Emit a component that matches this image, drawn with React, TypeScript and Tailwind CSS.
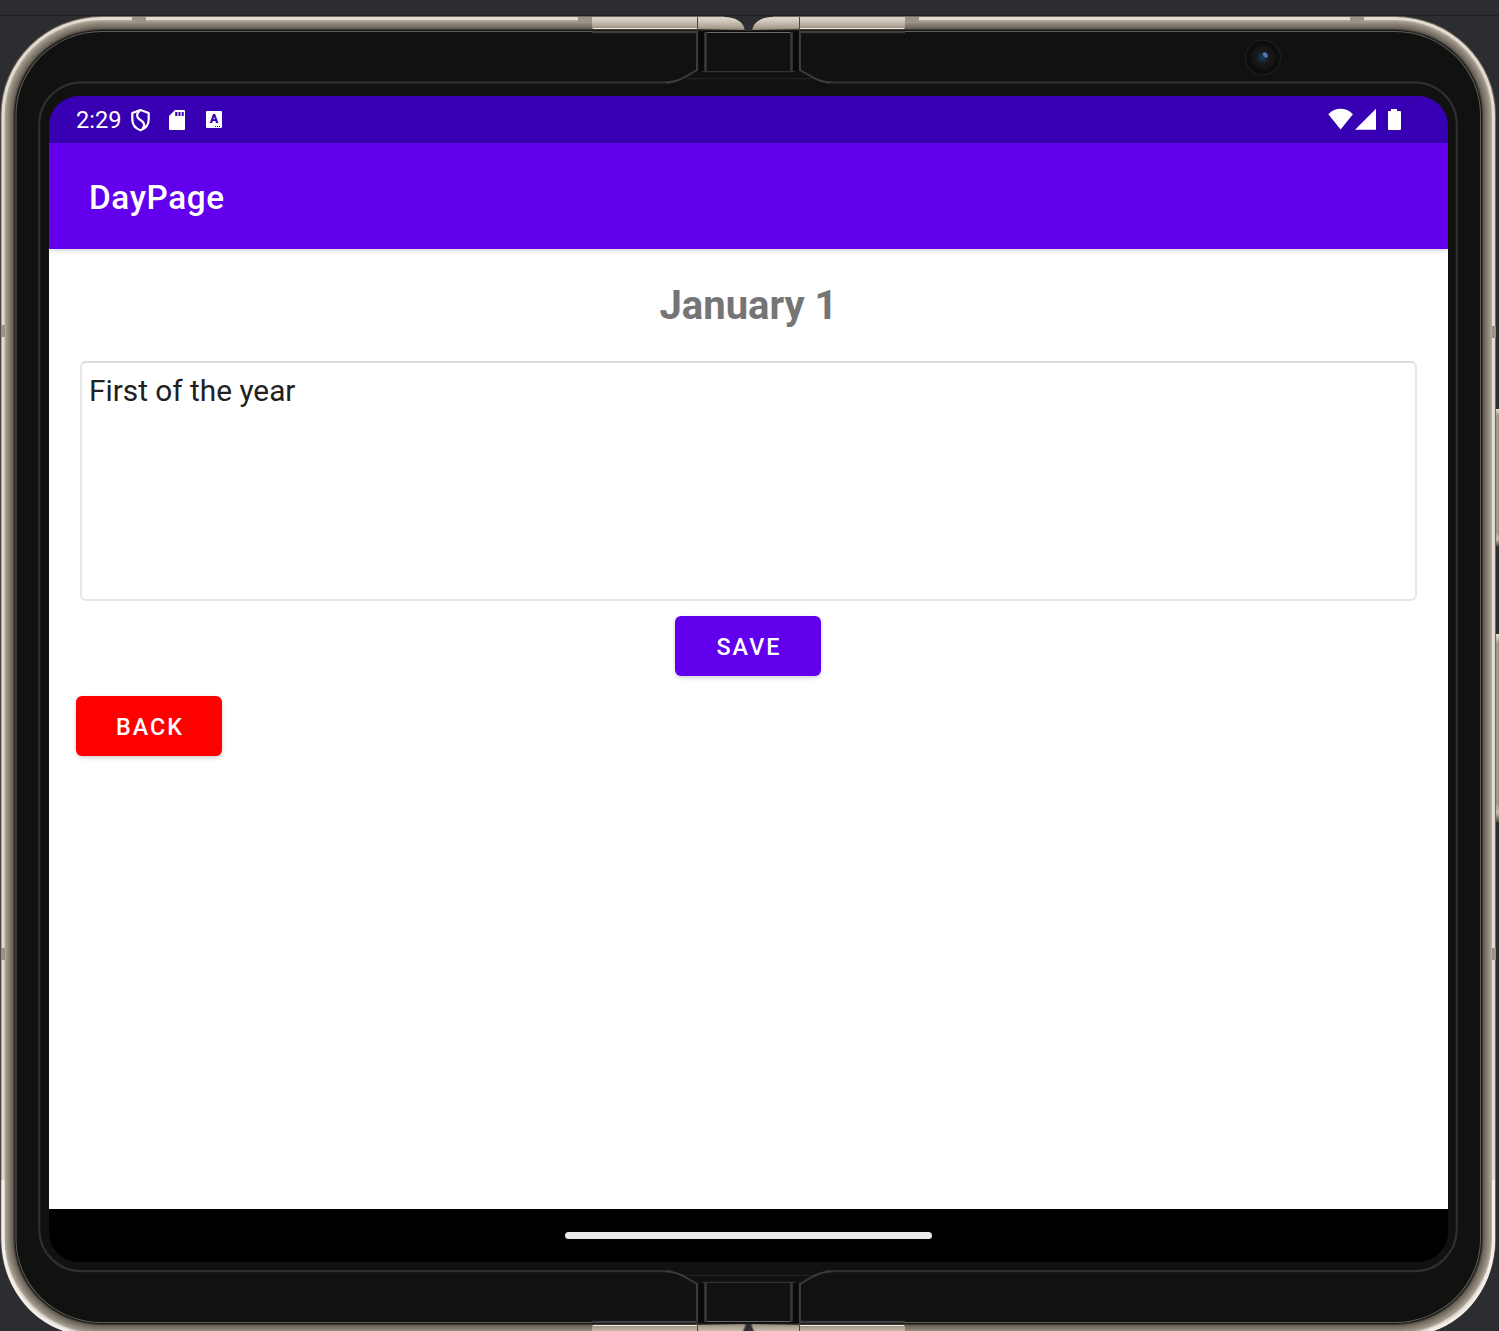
import React from "react";

const RIM = [
  { inset: 0, color: "#6f685e" },
  { inset: 1, color: "#e3dbd0" },
  { inset: 4, color: "#b5ada1" },
  { inset: 5, color: "#a19a8e" },
  { inset: 6, color: "#999286" },
  { inset: 7, color: "#91897d" },
  { inset: 8, color: "#898175" },
  { inset: 9, color: "#81796d" },
  { inset: 10, color: "#797165" },
  { inset: 11, color: "#70695d" },
  { inset: 12, color: "#645d52" },
  { inset: 13, color: "#3d3832" },
  { inset: 14, color: "#1b1a18" },
  { inset: 15, color: "#5b5c5c" },
  { inset: 16, color: "#111110" },
];

function HalfHinge() {
  return (
    <g fill="none">
      <rect x="592" y="17" width="105" height="12" fill="url(#hinge)" />
      <path d="M593 28.5H697" stroke="#f1ece3" />
      <path d="M698 17H724C736 17 744 22 745 30L698 29Z" fill="url(#hinge)" />
      <path d="M697.5 17V31" stroke="#4d473f" />
      <rect x="697" y="31" width="52" height="52" fill="#0c0c0c" />
      <path d="M698 69L670 84H749V33H698Z" fill="#111111" />
      <path d="M592 32.3H697V70L683 78Q674 82.5 666 82.5" stroke="#393b3c" strokeWidth="2" />
      <rect x="699" y="33" width="5" height="38" fill="#090909" />
      <path d="M705.5 32V71" stroke="#383b3d" strokeWidth="2.4" />
      <path d="M707 32.5H749" stroke="#696c6c" />
      <path d="M702 71.7H749" stroke="#303132" strokeWidth="1.3" />
      <path d="M686 78.7H749" stroke="#242627" />
    </g>
  );
}

function Hinge() {
  return (
    <g>
      <HalfHinge />
      <g transform="translate(1497 0) scale(-1 1)">
        <HalfHinge />
      </g>
    </g>
  );
}

function DeviceSkin() {
  return (
    <svg className="col-start-1 row-start-1 block h-[1331px] w-[1499px]" viewBox="0 0 1499 1331" aria-hidden="true">
      <defs>
        <linearGradient id="hinge" x1="0" x2="0" y1="0" y2="1">
          <stop offset="0" stopColor="#ddd5c9" />
          <stop offset=".3" stopColor="#d3cabe" />
          <stop offset=".8" stopColor="#aaa192" />
          <stop offset="1" stopColor="#8b8375" />
        </linearGradient>
        <linearGradient id="key" x1="0" x2="0" y1="0" y2="1">
          <stop offset="0" stopColor="#e8dfd4" />
          <stop offset=".05" stopColor="#a0978b" />
          <stop offset=".9" stopColor="#a0978b" />
          <stop offset=".95" stopColor="#c6bdb0" />
          <stop offset="1" stopColor="#51493f" />
        </linearGradient>
        <radialGradient id="lens">
          <stop offset="0" stopColor="#1d3e68" />
          <stop offset=".5" stopColor="#172a33" />
          <stop offset="1" stopColor="#17191a" />
        </radialGradient>
      </defs>
      <rect width="1499" height="1331" fill="#2b2d31" />
      <path d="M0 15.5H1499" stroke="#1d1e20" />
      <rect x="1496" y="409" width="3" height="137" fill="url(#key)" />
      <rect x="1496" y="634" width="3" height="188" fill="url(#key)" />
      {RIM.map((ring) => (
        <rect
          key={ring.inset}
          x={0.5 + ring.inset}
          y={16 + ring.inset}
          width={1495.5 - 2 * ring.inset}
          height={1322 - 2 * ring.inset}
          rx={101 - ring.inset}
          ry={99 - ring.inset}
          fill={ring.color}
        />
      ))}
      <g fill="none" stroke="#f3efe8" strokeWidth="3">
        <path d="M3 1180V1239C3 1285 31 1320 68 1331" />
        <path d="M1493.5 1180V1239C1493.5 1285 1466 1320 1429 1331" />
      </g>
      <g fill="#9b9385">
        <rect x="132" y="17" width="14" height="5" />
        <rect x="1350" y="17" width="14" height="5" />
        <rect x="578" y="17" width="14" height="5" />
        <rect x="905" y="17" width="14" height="5" />
        <rect x="1" y="325" width="4" height="12" />
        <rect x="1" y="948" width="4" height="12" />
        <rect x="1492" y="326" width="4" height="12" />
        <rect x="1492" y="948" width="4" height="12" />
      </g>
      <rect x="39.2" y="82.3" width="1417.6" height="1188.9" rx="42" fill="none" stroke="#2e2f30" strokeWidth="2.2" />
      <Hinge />
      <path d="M724 17C736 17 744 22 745 31H752C753 22 761 17 773 17V15.5H724Z" fill="#2b2d31" />
      <path d="M724 15.5H773" stroke="#1d1e20" />
      <g transform="translate(0 1354) scale(1 -1)">
        <Hinge />
        <path d="M740 16H757L750 30H747Z" fill="#2b2d31" />
      </g>
      <circle cx="1263" cy="57.5" r="17.5" fill="#0d0d0d" stroke="#222425" />
      <circle cx="1263" cy="57.5" r="12" fill="#161616" />
      <circle cx="1262.5" cy="57.5" r="7" fill="url(#lens)" />
      <ellipse cx="1265.3" cy="55" rx="2" ry="3" transform="rotate(-40 1265.3 55)" fill="#5078bd" />
    </svg>
  );
}

function StatusBar() {
  return (
    <div className="flex h-[47px] shrink-0 items-center bg-[#3700b3] pl-[27px] pr-[47px] text-white">
      <span className="w-[55px] pt-0.5 text-[23.6px] leading-none">2:29</span>
      <svg className="h-6 w-5" viewBox="0 0 20 24" fill="none" stroke="#fff" strokeWidth="2.2">
        <path d="M9.5 2L17.7 5V11.5C17.7 16.5 14.5 20.5 9.5 22.3C4.5 20.5 1.3 16.5 1.3 11.5V5Z" strokeLinejoin="round" />
        <path d="M8.5 3C5.2 6 5.6 8.8 8 11L11.5 13.6C13.6 15.6 13.2 18.6 11.5 21" />
      </svg>
      <svg className="ml-[18px] h-6 w-4" viewBox="0 0 16 24">
        <path d="M6 2H15Q16 2 16 3V21Q16 22 15 22H1.3Q0 22 0 21V8Z" fill="#fff" />
        <path d="M6.2 4H8.4V8H6.2ZM9.5 4H11.5V8H9.5ZM12.7 4H14.7V8H12.7Z" fill="#3700b3" />
      </svg>
      <span className="ml-[21px] grid h-[17px] w-4 place-items-center rounded-[1px] bg-white text-[12.5px] font-black leading-none text-[#3700b3]">
        <span className="col-start-1 row-start-1">A</span>
        <span className="col-start-1 row-start-1 flex gap-px self-end pb-px pl-1.5">
          <i className="size-px bg-[#3700b3]" />
          <i className="size-px bg-[#3700b3]" />
          <i className="size-px bg-[#3700b3]" />
        </span>
      </span>
      <svg className="ml-auto h-6 w-[73px]" viewBox="0 0 73 24" fill="#fff">
        <path d="M.3 6.2C7.2-1 18-1 24.9 6.2L12.6 21.4Z" />
        <path d="M27 21.7L48 .8V21.7Z" />
        <path d="M60 3H63V1H69V3H72Q73 3 73 4V20.8Q73 22 72 22H61Q60 22 60 20.8Z" />
      </svg>
    </div>
  );
}

export default function App() {
  return (
    <div className="grid h-[1331px] w-[1499px] overflow-hidden bg-[#2b2d31] font-['Roboto',sans-serif]">
      <DeviceSkin />
      <main className="z-10 col-start-1 row-start-1 ml-[49px] mt-24 flex h-[1166px] w-[1399px] flex-col overflow-hidden rounded-[30px]">
        <StatusBar />
        <header className="z-10 flex h-[106px] shrink-0 items-center bg-[#6200ee] pl-10 pt-[3px] text-[33.3px] font-medium tracking-[0.62px] text-white shadow-[0_1px_5px_rgba(0,0,0,0.22)]">
          DayPage
        </header>
        <section className="flex flex-1 flex-col bg-white px-[27px] pt-[33px]">
          <h1 className="self-center text-[40px] font-bold leading-[47px] text-[#757575]">January 1</h1>
          <div className="ml-1 mt-8 h-60 w-[1337px] rounded-[6px] border-2 border-[#e7e7e7] border-t-[#dcdcdc] px-[7px] pt-[10px] text-[29.8px] leading-[36px] text-[#212121]">
            First of the year
          </div>
          <button className="mr-px mt-[15px] h-[60px] w-[146px] self-center rounded-[6px] bg-[#6200ee] pt-0.5 text-[23.3px] font-medium tracking-[0.0893em] text-white shadow-[0_2px_4px_rgba(0,0,0,0.18)]">
            <span className="pl-0.5">SAVE</span>
          </button>
          <button className="mt-5 h-[60px] w-[146px] rounded-[6px] bg-[#ff0000] pt-0.5 text-[23.3px] font-medium tracking-[0.0893em] text-white shadow-[0_2px_4px_rgba(0,0,0,0.18)]">
            <span className="pl-0.5">BACK</span>
          </button>
        </section>
        <footer className="flex h-[53px] shrink-0 items-center justify-center bg-black">
          <div className="h-[7px] w-[367px] rounded-full bg-[#e9e9e9]" />
        </footer>
      </main>
    </div>
  );
}
